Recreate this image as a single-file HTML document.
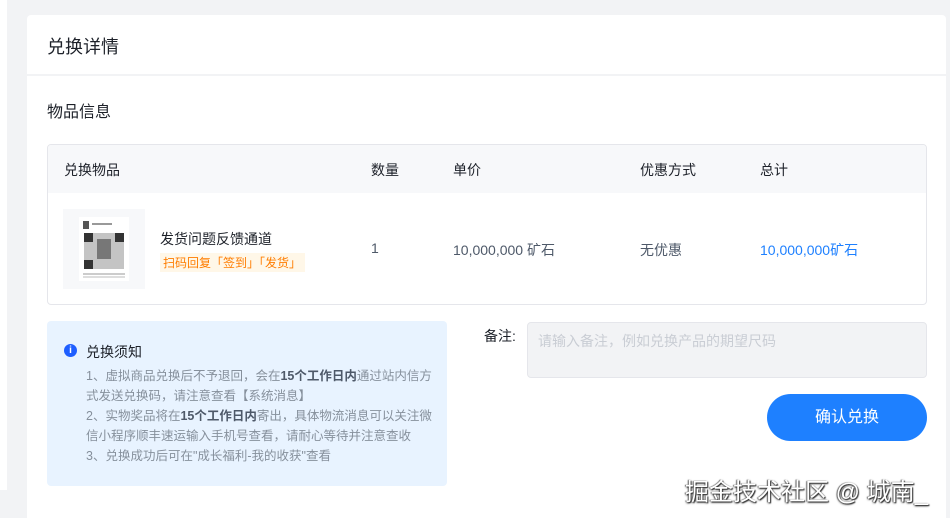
<!DOCTYPE html>
<html><head><meta charset="utf-8"><style>
*{margin:0;padding:0;box-sizing:border-box}
body{width:950px;height:518px;overflow:hidden;background:#f2f3f5;font-family:"Liberation Sans","Noto Sans CJK SC",sans-serif;color:#1d2129;position:relative}
.abs{position:absolute}
.ws{left:0;top:0;width:7px;height:490px;background:#fff}
.hdr{left:27px;top:15px;width:919px;height:59px;background:#fff;border-radius:4px 4px 0 0}
.body{left:27px;top:76px;width:919px;height:442px;background:#fff}
.t{white-space:nowrap}
.n{white-space:nowrap;font-size:12.5px;line-height:20px;color:#86909c}
.n b{color:#4e5969}
</style></head><body>
<div class="abs ws"></div>
<div class="abs hdr"><div class="abs t" style="left:20px;top:18px;font-size:18px">兑换详情</div></div>
<div class="abs body"></div>
<div class="abs t" style="left:47px;top:98px;font-size:16px">物品信息</div>
<div class="abs" style="left:47px;top:144px;width:880px;height:161px;border:1px solid #e5e6eb;border-radius:4px;overflow:hidden">
 <div class="abs" style="left:0;top:0;width:100%;height:48px;background:#f7f8fa"></div>
</div>
<div class="abs t" style="left:64px;top:160px;font-size:14px">兑换物品</div>
<div class="abs t" style="left:371px;top:160px;font-size:14px">数量</div>
<div class="abs t" style="left:453px;top:160px;font-size:14px">单价</div>
<div class="abs t" style="left:640px;top:160px;font-size:14px">优惠方式</div>
<div class="abs t" style="left:760px;top:160px;font-size:14px">总计</div>
<div class="abs" style="left:63px;top:209px;width:82px;height:80px;background:#f7f8fa">
 <svg class="abs" style="left:16px;top:8px" width="50" height="64" viewBox="0 0 50 64">
  <rect width="50" height="64" fill="#fff"/>
  <rect x="4" y="4" width="6" height="8" fill="#555"/>
  <rect x="13" y="6" width="20" height="2" fill="#999"/>
  <rect x="5" y="16" width="40" height="36" fill="#c4c4c4"/>
  <rect x="5" y="16" width="9" height="9" fill="#333"/><rect x="36" y="16" width="9" height="9" fill="#333"/><rect x="5" y="43" width="9" height="9" fill="#333"/>
  <rect x="18" y="22" width="14" height="20" fill="#777"/>
  <rect x="4" y="56" width="42" height="2" fill="#ccc"/><rect x="4" y="59" width="42" height="2" fill="#ddd"/>
 </svg>
</div>
<div class="abs t" style="left:160px;top:229px;font-size:14px">发货问题反馈通道</div>
<div class="abs t" style="left:160px;top:253px;font-size:12px;color:#ff7d00;background:#fff7e8;padding:1px 4px 1px 3px">扫码回复「签到」「发货」</div>
<div class="abs t" style="left:371px;top:240px;font-size:14px;color:#4e5969">1</div>
<div class="abs t" style="left:453px;top:240px;font-size:14px;color:#4e5969">10,000,000 矿石</div>
<div class="abs t" style="left:640px;top:240px;font-size:14px;color:#4e5969">无优惠</div>
<div class="abs t" style="left:760px;top:240px;font-size:14px;color:#1e80ff">10,000,000矿石</div>
<div class="abs" style="left:47px;top:321px;width:400px;height:165px;background:#e8f3ff;border-radius:4px"></div>
<div class="abs" style="left:64px;top:344px;width:13px;height:13px;border-radius:50%;background:#1e5eff;color:#fff;font-size:10px;font-weight:bold;text-align:center;line-height:13px">i</div>
<div class="abs t" style="left:86px;top:342px;font-size:14px">兑换须知</div>
<div class="abs n" style="left:86px;top:366px">1、虚拟商品兑换后不予退回，会在<b>15个工作日内</b>通过站内信方<br>式发送兑换码，请注意查看【系统消息】<br>2、实物奖品将在<b>15个工作日内</b>寄出，具体物流消息可以关注微<br>信小程序顺丰速运输入手机号查看，请耐心等待并注意查收<br>3、兑换成功后可在"成长福利-我的收获"查看</div>
<div class="abs t" style="left:484px;top:326px;font-size:14px">备注:</div>
<div class="abs" style="left:527px;top:322px;width:400px;height:56px;background:#f2f3f5;border:1px solid #e5e6eb;border-radius:4px"></div>
<div class="abs t" style="left:538px;top:331px;font-size:14px;color:#c9cdd4">请输入备注，例如兑换产品的期望尺码</div>
<div class="abs" style="left:767px;top:394px;width:160px;height:47px;background:#1e80ff;border-radius:24px;color:#fff;font-size:16px;text-align:center;line-height:47px">确认兑换</div>
<div class="abs t" style="left:685px;top:472px;font-size:24px;color:#fff;text-shadow:1px 1px 1px #333,-1px 0 1px #666,0 1px 2px #444">掘金技术社区 @ 城南_</div>
</body></html>
